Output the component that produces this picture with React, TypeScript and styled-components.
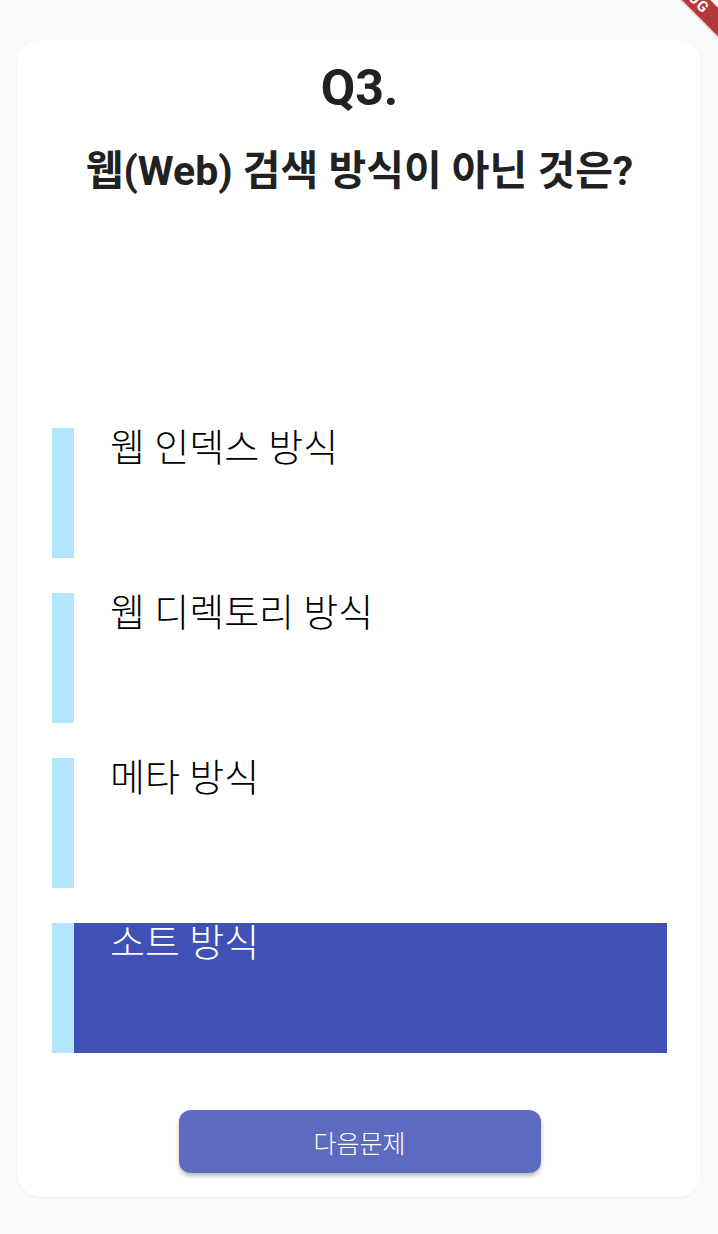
import React, { useState } from "react";
import styled, { createGlobalStyle } from "styled-components";

const GlobalStyle = createGlobalStyle`
  html, body {
    margin: 0;
    padding: 0;
    background: #fafafa;
  }
  body {
    font-family: Roboto, "Noto Sans CJK KR", sans-serif;
    -webkit-font-smoothing: antialiased;
  }
`;

const Screen = styled.div`
  position: relative;
  height: 1234px;
  padding: 40px 17px 37px;
  box-sizing: border-box;
  display: flex;
  overflow: hidden;
  background: #fafafa;
`;

const Card = styled.div`
  flex: 1;
  display: flex;
  flex-direction: column;
  align-items: center;
  padding: 19px 34px 24px 35px;
  background: #ffffff;
  border-radius: 24px;
  box-shadow: 0 1px 3px rgba(0, 0, 0, 0.06);
`;

const Title = styled.h1`
  margin: 0;
  font-size: 50px;
  line-height: 58px;
  font-weight: 700;
  color: #212121;
`;

const Question = styled.h2`
  margin: 30px 0 0;
  font-size: 41px;
  line-height: 48px;
  font-weight: 700;
  color: #212121;
  white-space: nowrap;
`;

const Spacer = styled.div`
  flex: 1;
`;

const OptionList = styled.div`
  width: 100%;
  display: flex;
  flex-direction: column;
  gap: 35px;
`;

const Option = styled.button`
  display: flex;
  height: 130px;
  padding: 0;
  border: none;
  background: #b3e5fc;
  cursor: pointer;
  text-align: left;
  font-family: inherit;
`;

const OptionBody = styled.div<{ $selected: boolean }>`
  flex: 1;
  margin-left: 22px;
  padding-left: 36px;
  background: ${(p) => (p.$selected ? "#3f51b5" : "#ffffff")};
  color: ${(p) => (p.$selected ? "#ffffff" : "#000000")};
  font-size: 38px;
  line-height: 41px;
  font-weight: 300;
`;

const NextButton = styled.button`
  margin-top: 57px;
  width: 362px;
  height: 63px;
  border: none;
  border-radius: 12px;
  background: #5c6bc0;
  color: #ffffff;
  font-family: inherit;
  font-size: 25px;
  font-weight: 300;
  box-shadow: 0 3px 4px rgba(0, 0, 0, 0.28);
  cursor: pointer;
`;

const DebugBanner = styled.div`
  position: absolute;
  top: -8px;
  right: 30px;
  width: 160px;
  height: 20px;
  transform: translate(50%, -50%) rotate(45deg);
  background: #b3393b;
  color: #ffffff;
  font-size: 15px;
  font-weight: 700;
  line-height: 20px;
  text-align: center;
  letter-spacing: 1px;
  box-shadow: 0 1px 3px rgba(0, 0, 0, 0.2);
`;

const options = ["웹 인덱스 방식", "웹 디렉토리 방식", "메타 방식", "소트 방식"];

export default function App() {
  const [selected, setSelected] = useState(3);

  return (
    <>
      <GlobalStyle />
      <Screen>
        <Card>
          <Title>Q3.</Title>
          <Question>웹(Web) 검색 방식이 아닌 것은?</Question>
          <Spacer />
          <OptionList>
            {options.map((text, i) => (
              <Option key={text} onClick={() => setSelected(i)}>
                <OptionBody $selected={i === selected}>{text}</OptionBody>
              </Option>
            ))}
          </OptionList>
          <NextButton>다음문제</NextButton>
        </Card>
        <DebugBanner>DEBUG</DebugBanner>
      </Screen>
    </>
  );
}
